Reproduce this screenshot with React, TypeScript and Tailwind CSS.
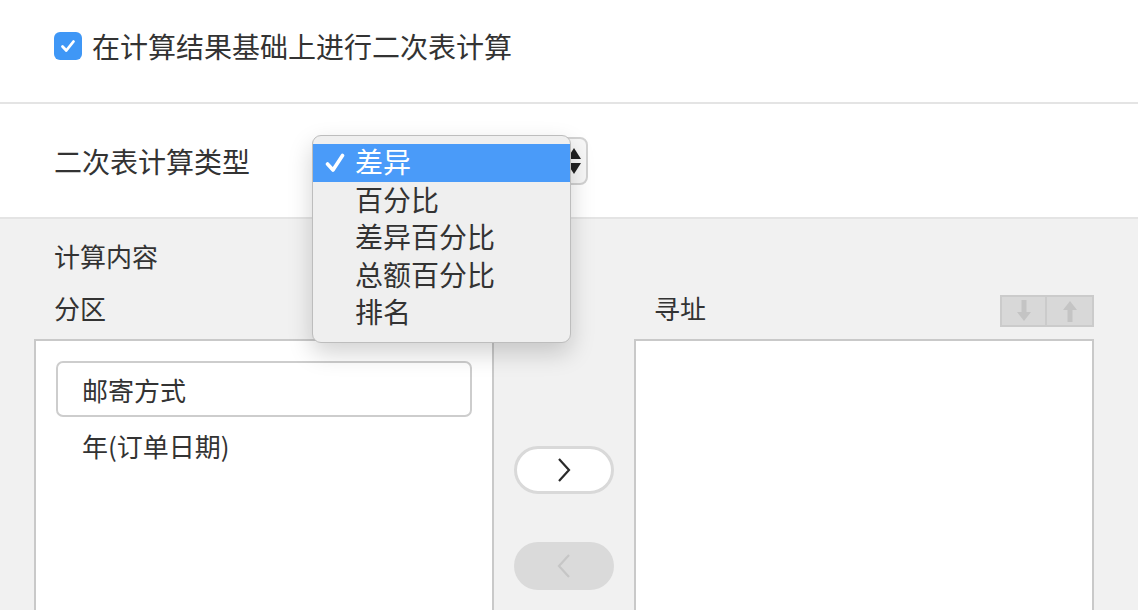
import React from "react";

const font = { fontFamily: '"Noto Sans CJK SC", "Noto Sans", sans-serif' };

export default function App() {
  return (
    <div
      className="relative w-[1138px] h-[610px] overflow-hidden bg-[#f1f1f1] text-[#333333]"
      style={font}
    >
      {/* section 1 */}
      <div className="h-[104px] bg-white border-b-2 border-[#e4e4e4] flex items-start pt-[32px] pl-[54px]">
        <div className="w-[28px] h-[28px] rounded-[6px] bg-[#3f97f6] flex items-center justify-center">
          <svg width="18" height="18" viewBox="0 0 18 18">
            <path d="M3.5 9.5 L7.3 13.5 L14.5 4.5" stroke="white" strokeWidth="2.8" fill="none" strokeLinecap="round" strokeLinejoin="round" />
          </svg>
        </div>
        <span className="ml-[10px] text-[28px] leading-[28px]">在计算结果基础上进行二次表计算</span>
      </div>

      {/* section 2 */}
      <div className="h-[115px] bg-white border-b-2 border-[#e4e4e4] flex items-center pl-[54px]">
        <span className="text-[28px] leading-[28px] w-[258px]">二次表计算类型</span>
        <div className="w-[276px] h-[48px] border-2 border-[#d2d2d2] rounded-[8px] bg-[#f7f7f7] flex items-center justify-end pr-[5px]">
          <svg width="14" height="32" viewBox="0 0 14 32">
            <path d="M0 14 L7 3 L14 14 Z" fill="#222" />
            <path d="M0 18 L7 29 L14 18 Z" fill="#222" />
          </svg>
        </div>
      </div>

      {/* section 3 */}
      <div className="px-[34px]">
        <div className="pl-[20px] pt-[22px] text-[26px] leading-[30px]">计算内容</div>
        <div className="flex items-end mt-[22px]">
          <div className="w-[460px] pl-[20px] text-[26px] leading-[30px]">分区</div>
          <div className="w-[140px]" />
          <div className="w-[460px] flex items-end justify-between">
            <span className="pl-[20px] text-[26px] leading-[30px]">寻址</span>
            <div className="flex h-[32px] border-2 border-[#cbcbcb] bg-[#d8d8d8] mb-[-4px]">
              <div className="w-[45px] flex items-center justify-center border-r-2 border-[#cbcbcb]">
                <svg width="16" height="26" viewBox="0 0 16 26">
                  <path d="M5.5 2 H10.5 V14 H15 L8 23 L1 14 H5.5 Z" fill="#c4c4c4" />
                </svg>
              </div>
              <div className="w-[45px] flex items-center justify-center">
                <svg width="16" height="26" viewBox="0 0 16 26">
                  <path d="M5.5 24 H10.5 V12 H15 L8 3 L1 12 H5.5 Z" fill="#c4c4c4" />
                </svg>
              </div>
            </div>
          </div>
        </div>
        <div className="flex mt-[16px]">
          <div className="w-[460px] h-[280px] bg-white border-2 border-[#c9c9c9] border-b-0 px-[20px] pt-[20px]">
            <div className="h-[56px] border-2 border-[#cdcdcd] rounded-[7px] flex items-center pl-[24px] text-[26px]">
              邮寄方式
            </div>
            <div className="h-[56px] flex items-center pl-[26px] text-[26px]">年(订单日期)</div>
          </div>
          <div className="w-[140px] flex flex-col items-center pt-[107px]">
            <div className="w-[100px] h-[48px] rounded-full bg-white border-[3px] border-[#d9d9d9] flex items-center justify-center">
              <svg width="16" height="26" viewBox="0 0 16 26">
                <path d="M3 2 L13 13 L3 24" stroke="#2a2a2a" strokeWidth="2.2" fill="none" />
              </svg>
            </div>
            <div className="w-[100px] h-[48px] mt-[48px] rounded-full bg-[#dadada] flex items-center justify-center">
              <svg width="16" height="26" viewBox="0 0 16 26">
                <path d="M13 2 L3 13 L13 24" stroke="#c6c6c6" strokeWidth="2.2" fill="none" />
              </svg>
            </div>
          </div>
          <div className="w-[460px] h-[280px] bg-white border-2 border-[#c9c9c9] border-b-0" />
        </div>
      </div>

      {/* dropdown popup */}
      <div className="absolute left-[312px] top-[135px] w-[259px] h-[208px] rounded-[9px] bg-[#efefef] border border-[#bdbdbd] shadow-[0_10px_24px_rgba(0,0,0,0.18)] pt-[8px]">
        <div className="h-[38px] bg-[#4a9bf9] text-white flex items-center text-[28px]">
          <span className="w-[42px] flex justify-center pl-[2px]">
            <svg width="20" height="20" viewBox="0 0 20 20">
              <path d="M2.5 11 L8 17 L17.5 2.5" stroke="white" strokeWidth="3.6" fill="none" strokeLinecap="round" strokeLinejoin="round" />
            </svg>
          </span>
          <span className="leading-[28px] mt-[-4px]">差异</span>
        </div>
        {["百分比", "差异百分比", "总额百分比", "排名"].map((t) => (
          <div key={t} className="h-[37.5px] flex items-center pl-[42px] text-[28px] text-[#333]">
            <span className="leading-[28px] mt-[-4px]">{t}</span>
          </div>
        ))}
      </div>
    </div>
  );
}
